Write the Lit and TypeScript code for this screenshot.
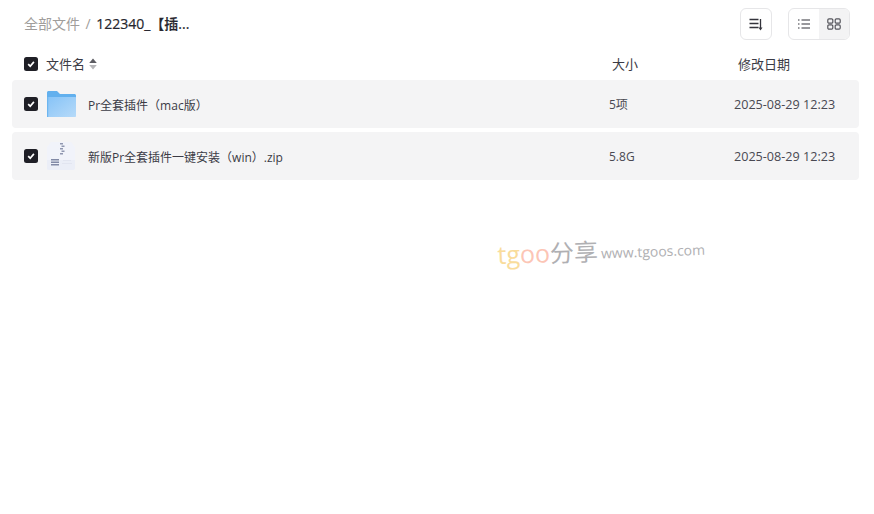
import { LitElement, html, css } from "lit";
import { customElement } from "lit/decorators.js";

const check = html`<span class="cb"><svg width="10" height="10" viewBox="0 0 10 10"><path d="M2.2 5.2 4.2 7.2 7.9 2.9" fill="none" stroke="#fff" stroke-width="1.7"/></svg></span>`;

const folder = html`<svg class="ficon" width="30" height="30" viewBox="0 0 30 30">
  <defs><linearGradient id="fg" x1="0" y1="0" x2="1" y2="1"><stop offset="0" stop-color="#86c3f7"/><stop offset="1" stop-color="#b6daf9"/></linearGradient></defs>
  <path d="M1 3.500C1 2.700 1.700 2 2.500 2H11l3 3h14.500c.8 0 1.500.7 1.500 1.500V10H1z" fill="#62b0ee"/>
  <path d="M1 8h28.500c.3 0 .5.2.5.5V27c0 .6-.4 1-1 1H2c-.6 0-1-.4-1-1z" fill="url(#fg)"/>
  <path d="M1 8v20h1.200V8z" fill="#6db6f0"/>
</svg>`;

const zip = html`<svg class="ficon" width="30" height="30" viewBox="0 0 30 30">
  <path d="M5 1h20l4 5v21c0 1-.8 2-2 2H3c-1.200 0-2-1-2-2V6z" fill="#f1f3fa"/>
  <path d="M1 19h28v8c0 1-.8 2-2 2H3c-1.200 0-2-1-2-2z" fill="#ebeef7"/>
  <path d="M14 2h3v1.500h-3zM15.500 4.500h3V6h-3zM14 7h3v1.500h-3zM15.500 9.500h3V11h-3zM14 12h3v1.500h-3z" fill="#9097b0"/>
  <path d="M5 18h8v1.500H5zM5 20.500h8V22H5zM5 23h8v1.500H5z" fill="#8189a6"/>
  <path d="M17 19h8v1H17zM16 22h10v1H16z" fill="#e2e5f0"/>
</svg>`;

@customElement("app-root")
export class AppRoot extends LitElement {
  static styles = css`
    :host { display: block; width: 874px; height: 514px; position: relative; overflow: hidden; background: #fff;
      font-family: "Open Sans", "Noto Sans CJK SC", sans-serif; color: #3b3b45; font-size: 12px; }
    .top { display: flex; align-items: center; height: 32px; padding: 8px 24px 0; }
    .crumb { display: flex; align-items: center; font-size: 14px; flex: 1; margin-top: -2px; }
    .root { color: #a09d9b; }
    .sep { color: #a09d9b; margin: 0 5.500px; }
    .cur { color: #26262e; font-weight: 500; -webkit-text-stroke: 0.2px #26262e; }
    .sort, .toggle { border: 1px solid #e6e6e8; border-radius: 6px; height: 32px; box-sizing: border-box; display: flex; background: #fff; }
    .sort { width: 32px; align-items: center; justify-content: center; margin-right: 16px; }
    .toggle { width: 62px; overflow: hidden; }
    .toggle span { flex: 1; display: flex; align-items: center; justify-content: center; }
    .toggle .off { background: #f3f3f4; }
    .actions { display: flex; }
    .head, .row { display: grid; grid-template-columns: 14px 1fr 125px 113px; align-items: center; }
    .head { height: 32px; margin: 8px 12px 0; padding: 0 12px; font-size: 13px; }
    .head .name { display: flex; align-items: center; gap: 4px; margin-left: 8px; padding-bottom: 2px; }
    .head .name svg { position: relative; top: 1px; }
    .head .size { padding-bottom: 2px; }
    .head .date { margin-left: 1px; padding-bottom: 2px; }
    .list { display: flex; flex-direction: column; gap: 4px; margin: 0 15px 0 12px; }
    .row { height: 48px; background: #f4f4f5; border-radius: 4px; padding: 0 12px; }
    .cell { display: flex; align-items: center; gap: 12px; margin-left: 8px; }
    .cell span { padding-top: 1px; }
    .ficon { flex: none; }
    .meta { color: #494952; }
    .row .date { font-size: 12.600px; white-space: nowrap; }
    .cb { width: 14px; height: 14px; border-radius: 2.500px; background: #1f1f26; display: flex; align-items: center; justify-content: center; }
    .wm { position: absolute; left: 498px; top: 236px; display: flex; align-items: baseline; transform: rotate(-2deg); transform-origin: left bottom; white-space: nowrap; }
    .wm .t { font-size: 25px; color: #f9dc9c; }
    .wm .o { font-size: 25px; color: #fcc5b5; }
    .wm .cn { font-size: 24px; color: #b0b0b3; }
    .wm .url { font-size: 14px; color: #b0b0b3; margin-left: 3px; position: relative; top: -2px; }
  `;

  render() {
    return html`
      <div class="top">
        <div class="crumb"><span class="root">全部文件</span><span class="sep">/</span><span class="cur">122340_【插...</span></div>
        <div class="actions">
          <div class="sort"><svg width="16" height="16" viewBox="0 0 16 16" fill="none" stroke="#33333b" stroke-width="1.300"><path d="M1.500 3.500h9M1.500 7.500h9M1.500 11.500h9"/><path d="M12.500 3v9" /><path d="M12.500 14.500 10.500 11.500h4z" fill="#33333b" stroke="none"/></svg></div>
          <div class="toggle">
            <span><svg width="14" height="14" viewBox="0 0 14 14" fill="none" stroke="#33333b" stroke-width="1.200"><path d="M1 3h1.500M1 7h1.500M1 11h1.500M4.500 3H13M4.500 7H13M4.500 11H13"/></svg></span>
            <span class="off"><svg width="14" height="14" viewBox="0 0 14 14" fill="none" stroke="#55555c" stroke-width="1.200"><rect x=".8" y="1.800" width="5" height="4.400" rx="1.200"/><rect x="8.200" y="1.800" width="5" height="4.400" rx="1.200"/><rect x=".8" y="7.800" width="5" height="4.400" rx="1.200"/><rect x="8.200" y="7.800" width="5" height="4.400" rx="1.200"/></svg></span>
          </div>
        </div>
      </div>
      <div class="head">
        ${check}
        <div class="name">文件名 <svg width="8" height="12" viewBox="0 0 8 12"><path d="M4 .5 7.800 5H.2z" fill="#5c5c62"/><path d="M4 11.500 .2 7h7.600z" fill="#b5b5b8"/></svg></div>
        <div class="size">大小</div>
        <div class="date">修改日期</div>
      </div>
      <div class="list">
        <div class="row">
          ${check}
          <div class="cell">${folder}<span>Pr全套插件（mac版）</span></div>
          <div class="meta size">5项</div>
          <div class="meta date">2025-08-29 12:23</div>
        </div>
        <div class="row">
          ${check}
          <div class="cell">${zip}<span>新版Pr全套插件一键安装（win）.zip</span></div>
          <div class="meta size">5.8G</div>
          <div class="meta date">2025-08-29 12:23</div>
        </div>
      </div>
      <div class="wm"><span class="t">tg</span><span class="o">oo</span><span class="cn">分享</span><span class="url">www.tgoos.com</span></div>
    `;
  }
}
